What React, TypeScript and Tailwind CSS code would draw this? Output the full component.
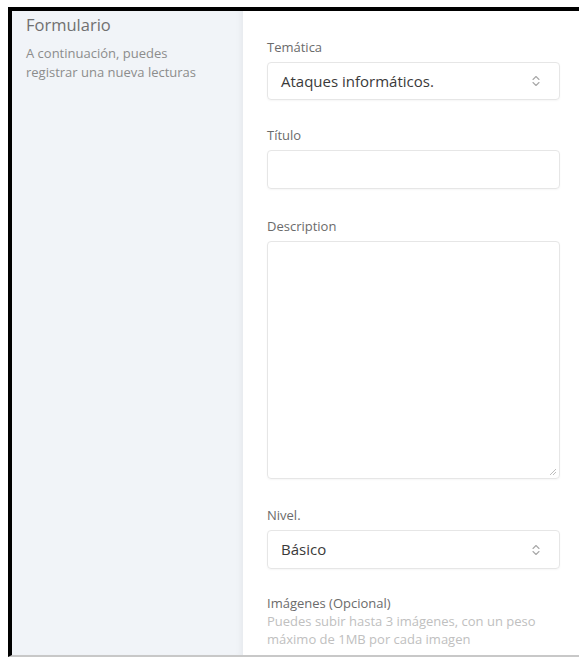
import React from 'react';

const SelectArrows: React.FC = () => (
  <svg width="10" height="14" viewBox="0 0 10 14" fill="none" className="text-[#a8a8a8]">
    <path d="M2 5.5 L5 2.5 L8 5.5" stroke="currentColor" strokeWidth="1.1" strokeLinecap="round" strokeLinejoin="round" />
    <path d="M2 8.5 L5 11.5 L8 8.5" stroke="currentColor" strokeWidth="1.1" strokeLinecap="round" strokeLinejoin="round" />
  </svg>
);

const Label: React.FC<{ children: React.ReactNode }> = ({ children }) => (
  <div className="text-[13px] leading-[18px] text-[#6b6b6b] mb-[6px]">{children}</div>
);

const fieldBox = 'rounded-[4px] border border-[#e6e6e6] shadow-[0_1px_2px_rgba(0,0,0,0.04)]';

const App: React.FC = () => {
  return (
    <div className="w-[579px] h-[658px] bg-white pt-[7px] pl-[8px] overflow-hidden" style={{ fontFamily: '"Open Sans", "Noto Sans", sans-serif' }}>
      <div className="flex h-[650px] border-t-4 border-l-4 border-black border-b-2 border-b-[#c8c8c8]">
        {/* Sidebar */}
        <aside className="w-[231px] shrink-0 bg-[#f1f4f8] px-[14px] pt-[3px] shadow-[inset_-6px_0_6px_-4px_rgba(0,0,0,0.05)]">
          <h2 className="text-[16.5px] leading-[22px] text-[#707070] font-normal">Formulario</h2>
          <p className="mt-[8px] text-[13px] leading-[19px] text-[#8c8c8c]">
            A continuación, puedes
            <br />
            registrar una nueva lecturas
          </p>
        </aside>

        {/* Form */}
        <main className="flex-1 pl-[24px] pr-[19px] pt-[27px]">
          <Label>Temática</Label>
          <div className={`h-[38px] flex items-center justify-between pl-[13px] pr-[18px] ${fieldBox}`}>
            <span className="text-[15px] text-[#3a3a3a]">Ataques informáticos.</span>
            <SelectArrows />
          </div>

          <div className="mt-[26px]">
            <Label>Título</Label>
            <div className={`h-[39px] ${fieldBox}`} />
          </div>

          <div className="mt-[28px]">
            <Label>Description</Label>
            <div className={`relative h-[238px] ${fieldBox}`}>
              <svg width="8" height="8" viewBox="0 0 8 8" className="absolute right-[2px] bottom-[2px]">
                <path d="M7 1 L1 7 M7 4 L4 7" stroke="#b5b5b5" strokeWidth="0.9" />
              </svg>
            </div>
          </div>

          <div className="mt-[27px]">
            <Label>Nivel.</Label>
            <div className={`h-[39px] flex items-center justify-between pl-[13px] pr-[18px] ${fieldBox}`}>
              <span className="text-[15px] text-[#3a3a3a]">Básico</span>
              <SelectArrows />
            </div>
          </div>

          <div className="mt-[25px]">
            <div className="text-[13px] leading-[18px] text-[#6b6b6b]">Imágenes (Opcional)</div>
            <p className="text-[13px] leading-[18px] text-[#c0c0c0]">
              Puedes subir hasta 3 imágenes, con un peso
              <br />
              máximo de 1MB por cada imagen
            </p>
          </div>
        </main>
      </div>
    </div>
  );
};

export default App;
